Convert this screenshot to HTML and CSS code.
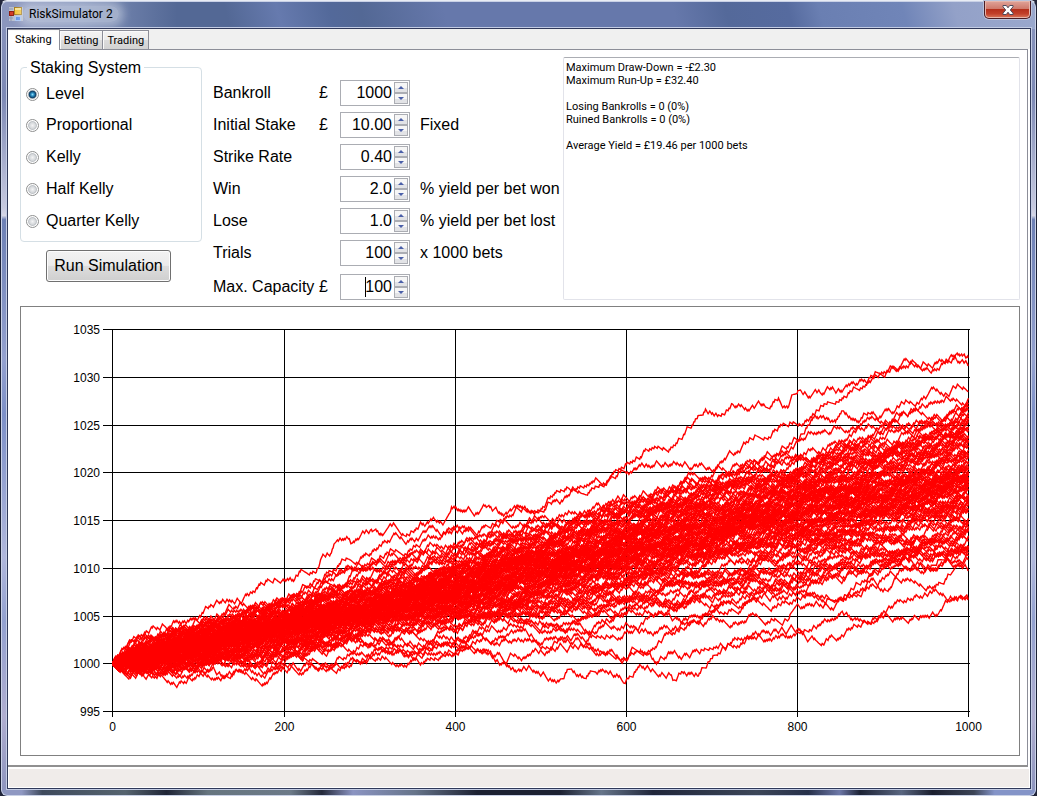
FILE: index.html
```html
<!DOCTYPE html>
<html lang="en">
<head>
<meta charset="utf-8">
<title>RiskSimulator 2</title>
<link rel="stylesheet" href="styles.css">
</head>
<body>
<div class="window">
  <header class="titlebar">
    <svg class="app-icon" width="14" height="14" viewBox="0 0 14 14" aria-hidden="true">
      <rect x="0" y="0" width="14" height="14" fill="#b9c0d0"/>
      <rect x="5.500" y="0.500" width="7" height="7" fill="#f9c52c" stroke="#a87b16"/>
      <rect x="6" y="1" width="6" height="2" fill="#fde58a"/>
      <rect x="0.500" y="4.500" width="4" height="4" fill="#d33a24" stroke="#8e1d10"/>
      <rect x="6.500" y="9.500" width="5" height="4" fill="#5b8fe6" stroke="#a9c6f5"/>
      <path d="M0 2h4M0 11h4M2 9v5" stroke="#8f97ab" fill="none"/>
    </svg>
    <h1 class="title">RiskSimulator 2</h1>
    <button class="close" type="button" aria-label="Close">
      <svg width="12" height="10" viewBox="0 0 12 10" aria-hidden="true">
        <path d="M1 .5h3.300L6 2.800 7.700.5H11v1.300L8.300 5 11 8.200v1.300H7.700L6 7.200 4.300 9.500H1V8.200L3.700 5 1 1.800z" fill="#fff" stroke="#4e4a5c" stroke-width="1"/>
      </svg>
    </button>
  </header>

  <div class="client">
    <nav class="tabs" role="tablist">
      <button class="tab tab-active" type="button" role="tab" aria-selected="true">Staking</button>
      <button class="tab" type="button" role="tab" aria-selected="false">Betting</button>
      <button class="tab" type="button" role="tab" aria-selected="false">Trading</button>
    </nav>

    <main class="page">
      <div class="settings">
        <div class="side">
          <fieldset class="group">
            <legend>Staking System</legend>
            <label class="option"><input type="radio" name="system" checked>Level</label>
            <label class="option"><input type="radio" name="system">Proportional</label>
            <label class="option"><input type="radio" name="system">Kelly</label>
            <label class="option"><input type="radio" name="system">Half Kelly</label>
            <label class="option"><input type="radio" name="system">Quarter Kelly</label>
          </fieldset>
          <button class="run" type="button">Run Simulation</button>
        </div>

        <form class="fields">
          <div class="field"><label for="bankroll">Bankroll</label><span class="unit">£</span>
            <span class="spin"><input id="bankroll" type="text" value="1000"><span class="arrows"><button type="button" class="up" aria-label="Increase"></button><button type="button" class="down" aria-label="Decrease"></button></span></span></div>
          <div class="field"><label for="stake">Initial Stake</label><span class="unit">£</span>
            <span class="spin"><input id="stake" type="text" value="10.00"><span class="arrows"><button type="button" class="up" aria-label="Increase"></button><button type="button" class="down" aria-label="Decrease"></button></span></span><span class="note">Fixed</span></div>
          <div class="field"><label for="strike">Strike Rate</label><span class="unit"></span>
            <span class="spin"><input id="strike" type="text" value="0.40"><span class="arrows"><button type="button" class="up" aria-label="Increase"></button><button type="button" class="down" aria-label="Decrease"></button></span></span></div>
          <div class="field"><label for="win">Win</label><span class="unit"></span>
            <span class="spin"><input id="win" type="text" value="2.0"><span class="arrows"><button type="button" class="up" aria-label="Increase"></button><button type="button" class="down" aria-label="Decrease"></button></span></span><span class="note">% yield per bet won</span></div>
          <div class="field"><label for="lose">Lose</label><span class="unit"></span>
            <span class="spin"><input id="lose" type="text" value="1.0"><span class="arrows"><button type="button" class="up" aria-label="Increase"></button><button type="button" class="down" aria-label="Decrease"></button></span></span><span class="note">% yield per bet lost</span></div>
          <div class="field"><label for="trials">Trials</label><span class="unit"></span>
            <span class="spin"><input id="trials" type="text" value="100"><span class="arrows"><button type="button" class="up" aria-label="Increase"></button><button type="button" class="down" aria-label="Decrease"></button></span></span><span class="note">x 1000 bets</span></div>
          <div class="field field-last"><label for="capacity">Max. Capacity</label><span class="unit">£</span>
            <span class="spin"><input id="capacity" class="editing" type="text" value="100"><span class="arrows"><button type="button" class="up" aria-label="Increase"></button><button type="button" class="down" aria-label="Decrease"></button></span></span></div>
        </form>

        <textarea class="results" aria-label="Results" readonly>Maximum Draw-Down = -£2.30
Maximum Run-Up = £32.40

Losing Bankrolls = 0 (0%)
Ruined Bankrolls = 0 (0%)

Average Yield = £19.46 per 1000 bets</textarea>
      </div>

      <div class="chart">
        <svg id="plot" viewBox="21 307 998 448" role="img" aria-label="Bankroll by number of bets"></svg>
      </div>
    </main>

    <footer class="status"></footer>
  </div>
</div>
<script src="chart.js"></script>
</body>
</html>
```
FILE: styles.css
```css
* { box-sizing: border-box; }

body {
  margin: 0;
  background: #23263a;
  color: #000;
  font: 16px/20px "Liberation Sans", Arial, sans-serif;
}

button, input, textarea { font: inherit; color: inherit; }

.window {
  display: flex;
  flex-direction: column;
  min-height: 100vh;
  padding: 0 5px 7px 6px;
  border: 1px solid #1b2036;
  border-top-color: #e8ecf4;
  border-radius: 7px;
  box-shadow: inset 0 0 0 1px #c9d1e6;
  background:
    linear-gradient(90deg, #8b96bd 0, #8b96bd 2%, #7f8fb8 8%, transparent 17%) 0 0 / 100% 28px no-repeat,
    linear-gradient(75deg, #536895 0, #536895 22%, #667aae 27%, #53699a 32%, #536895 35%, #6678ab 43%, #6678ab 65%, #54699a 70%, #566b9f 76%, #6a7fb2 79%, #7085b8 87%, #93a1c8 92%, #9aa8cd 100%) 0 0 / 100% 28px no-repeat,
    linear-gradient(90deg, #8f98c2 0 2%, #3e4a5c 4%, #56646f 12%, #1f2536 16%, #66757f 20%, #6c7a88 28%, #24293b 31%, #8b94c2 34%, #66748a 40%, #1c2132 46%, #1c2132 54%, #66758a 58%, #20263a 63%, #3c4658 73%, #26304a 78%, #6d78a8 81%, #1c2235 83%, #596680 87%, #1a1e2e 90%, #3c4456 94%, #8494c8 96%) 0 100% / 100% 6px no-repeat,
    linear-gradient(#8a95bd 0, #7d89b5 12%, #c6c9df 26%, #d6d7e6 27%, #6d80b5 27.5%, #94a1cf 45%, #7d90c8 52%, #b0b7dc 70%, #93a1d0 78%, #b0aed0 90%, #8b93bd 100%);
}

.titlebar {
  display: flex;
  align-items: center;
  height: 26px;
  padding-left: 2px;
}

.title {
  margin: 0 auto 0 0;
  padding: 0 6px;
  border-radius: 10px;
  background: rgba(225, 230, 240, .45);
  box-shadow: 0 0 9px 5px rgba(225, 230, 240, .45);
  font: 12px/16px Roboto, sans-serif;
}

.close {
  display: grid;
  place-items: center;
  align-self: flex-start;
  width: 47px;
  height: 18px;
  padding: 0;
  border: 1px solid #4a1c24;
  border-top: 0;
  border-radius: 0 0 5px 5px;
  background: linear-gradient(#e0a49a 0, #cf7a6c 45%, #b5301c 50%, #c2402a 75%, #d9785c 100%);
  box-shadow: inset 0 0 0 1px #e6b5aa, 0 0 0 1px #b9c2da;
}

.client {
  display: flex;
  flex: 1;
  flex-direction: column;
  margin-top: 1px;
  border: 1px solid #30395a;
  box-shadow: 0 0 0 1px #c3cce4;
  background: #fff;
}

.tabs {
  display: flex;
  align-items: flex-end;
  height: 20px;
  background: #f0f0f0;
}

.tab {
  height: 19px;
  padding: 0 4px;
  border: 1px solid #8c8e98;
  border-bottom: 0;
  border-left: 0;
  background: linear-gradient(#f3f3f3 0, #ececec 50%, #dcdcdc 51%, #d2d2d2 100%);
  box-shadow: inset 1px 1px #fafafa;
  font: 11px/20px Roboto, sans-serif;
}

.tab-active {
  position: relative;
  height: 21px;
  margin-bottom: -1px;
  padding: 0 7px;
  background: #fff;
}

.page {
  flex: 1;
  margin-right: 2px;
  padding: 7px 7px 9px 12px;
  border: 1px solid #8c8e98;
  border-left: 0;
  border-bottom: 2px solid #909090;
}

.settings {
  display: flex;
  align-items: flex-start;
}

.side {
  display: flex;
  flex-direction: column;
  width: 182px;
  margin-right: 11px;
}

.group {
  min-width: 0;
  height: 185px;
  margin: 0;
  padding: 2px 0 0 5px;
  border: 1px solid #d5dfe5;
  border-radius: 4px;
}

.group legend {
  margin-left: 1px;
  padding: 1px 3px 0;
  line-height: 19px;
}

.option {
  display: flex;
  align-items: center;
  gap: 7px;
  height: 32px;
}

.option:first-of-type { height: 30px; }

.option input {
  appearance: none;
  width: 13px;
  height: 13px;
  margin: 0;
  border: 1px solid #8e8f8f;
  border-radius: 50%;
  background: radial-gradient(circle at 50% 50%, #f4f4f5 0, #d3d6d9 40%, #b9bdc2 50%, #fff 62%);
}

.option input:checked {
  background: radial-gradient(circle at 50% 50%, #8fdcf8 0, #2b8fc4 20%, #0c3a60 44%, #b9bfc5 54%, #fff 66%);
}

.run {
  align-self: flex-start;
  width: 125px;
  height: 32px;
  margin: 8px 0 0 26px;
  padding: 0;
  border: 1px solid #707070;
  border-radius: 3px;
  background: linear-gradient(#f2f2f2 0, #ebebeb 48%, #dddddd 50%, #cfcfcf 100%);
  box-shadow: inset 0 0 0 1px #fcfcfc;
}

.fields {
  display: flex;
  flex-direction: column;
  gap: 6px;
  width: 350px;
  padding-top: 23px;
}

.field {
  display: grid;
  grid-template-columns: 106px 21px 70px 1fr;
  align-items: center;
  height: 26px;
  white-space: nowrap;
}

.field-last { margin-top: 2px; }

.note { padding-left: 10px; }

.spin {
  display: flex;
  height: 26px;
  padding: 1px;
  border: 1px solid #abadb3;
  background: #fff;
}

.spin input {
  flex: 1;
  min-width: 0;
  padding: 0 2px 0 0;
  border: 0;
  outline: 0;
  background: none;
  text-align: right;
}

.spin .editing {
  background: linear-gradient(#000, #000) 23px 50% / 1px 20px no-repeat;
}

.arrows {
  display: flex;
  flex-direction: column;
  width: 14px;
}

.arrows button {
  display: grid;
  place-items: center;
  flex: 1;
  padding: 0;
  border: 1px solid #abadb3;
  background: linear-gradient(#f6f6f6 50%, #e2e3e6 51%);
}

.up::before, .down::before {
  content: "";
  border: 0 solid transparent;
  border-width: 0 3px;
}

.up::before { border-bottom: 3px solid #4a5fa8; }
.down::before { border-top: 3px solid #4a5fa8; }

.results {
  flex: 1;
  min-width: 0;
  height: 243px;
  padding: 3px 2px;
  border: 1px solid #e2e3ea;
  border-top-color: #abadb3;
  border-radius: 2px;
  outline: 0;
  background: #fff;
  font-family: Roboto, sans-serif;
  font-size: 11px;
  line-height: 13px;
  resize: none;
}

.chart {
  margin-top: 6px;
  border: 1px solid #808080;
}

.chart svg {
  display: block;
  width: 100%;
}

.grid { fill: none; stroke: #000; shape-rendering: crispEdges; }
.run-line { fill: none; stroke: #f00; stroke-width: 1.4; }
.axis { font-size: 12px; }
.axis-y { text-anchor: end; }
.axis-x { text-anchor: middle; }

.status {
  height: 21px;
  border: 1px solid #fff;
  border-top-width: 2px;
  background: #f0ecea;
}
```
FILE: chart.js
```js
const plot = document.getElementById("plot");
const LEFT = 112.5, RIGHT = 968.5, TOP = 329.5, BOTTOM = 711.5;
const BETS = 1000, LOW = 995, HIGH = 1035;
const STEP_X = (RIGHT - LEFT) / BETS;
const STEP_Y = (BOTTOM - TOP) / (HIGH - LOW);
const px = (bet) => LEFT + bet * STEP_X;
const py = (value) => BOTTOM - (value - LOW) * STEP_Y;

function add(name, attrs, text) {
  const node = document.createElementNS("http://www.w3.org/2000/svg", name);
  for (const key in attrs) node.setAttribute(key, attrs[key]);
  if (text !== undefined) node.textContent = text;
  plot.appendChild(node);
}

let seed = 20117;
function random() {
  seed = (seed + 0x6d2b79f5) | 0;
  let t = Math.imul(seed ^ (seed >>> 15), 1 | seed);
  t = (t + Math.imul(t ^ (t >>> 7), 61 | t)) ^ t;
  return ((t ^ (t >>> 14)) >>> 0) / 4294967296;
}
const bet = () => (random() < 0.4 ? 0.2 : -0.1);

// Gridlines, tick marks and axis labels
for (let v = LOW; v <= HIGH; v += 5) {
  const y = Math.floor(py(v)) + 0.5;
  add("path", { class: "grid", d: `M103 ${y}H970` });
  add("text", { class: "axis axis-y", x: 100, y: y + 4 }, v);
}
for (let n = 0; n <= BETS; n += 200) {
  const x = Math.ceil(px(n) - 0.5) + 0.5;
  add("path", { class: "grid", d: `M${x} 329V717` });
  add("text", { class: "axis axis-x", x: x, y: 731 }, n);
}

function draw(points) {
  add("path", { class: "run-line", d: "M" + points.map((p) => p[0].toFixed(1) + " " + p[1].toFixed(1)).join("L") });
}

// Allowed band for ordinary runs: bet, lowest and highest value
const BAND = [[50, 999.2, 1003.4], [100, 999, 1005.3], [200, 999.6, 1008.2], [300, 1000, 1010.8],
  [400, 1000.3, 1013.7], [500, 1002, 1015.5], [600, 1004, 1019], [700, 1005.500, 1021.5],
  [800, 1007, 1024], [900, 1009, 1025.8], [1000, 1010.3, 1028.2]];

// Final values are spread evenly across the band, a little denser at its centre
function ordinaryRun(target) {
  for (;;) {
    const values = [1000];
    for (let n = 1; n <= BETS; n++) values.push(values[n - 1] + bet());
    if (Math.abs(values[BETS] - target) < 0.5 &&
        BAND.every(([n, low, high]) => values[n] >= low && values[n] <= high)) return values;
  }
}
const ORDINARY = 92;
for (let i = 0; i < ORDINARY; i++) {
  const u = (2 * i) / (ORDINARY - 1) - 1;
  const target = 1019.4 + 8.2 * Math.sign(u) * Math.pow(Math.abs(u), 1.4);
  draw(ordinaryRun(target).map((v, n) => [px(n), py(v)]));
}

// Outlying runs, pinned at plot coordinates with betting noise between pins
const OUTLIERS = [
  [[112,663],[124,648],[135,638],[150,629],[173,621],[200,617],[212,606],[235,602],[250,592],[280,583],[294,580],[303,571],[315,573],[320,560],[330,554],[337,540],[348,539],[352,543],[370,530],[378,533],[388,527],[403,535],[420,522],[432,519],[445,520],[451,507],[462,512],[484,506],[492,511],[503,516],[520,506],[533,513],[545,505],[568,488],[580,493],[600,485],[616,470],[625,464],[640,457],[655,447],[668,452],[690,428],[705,409],[718,415],[732,404],[745,408],[765,407],[778,398],[788,407],[800,390],[820,393],[832,387],[850,384],[875,375],[895,368],[915,365],[935,370],[955,355],[968,358]],
  [[112,663],[200,640],[300,610],[360,570],[420,545],[480,540],[560,520],[620,500],[680,488],[740,470],[797,440],[808,425],[822,406],[840,400],[860,388],[880,374],[890,370],[905,368],[932,368],[950,356],[960,362],[968,366]],
  [[112,663],[180,640],[285,600],[350,560],[390,540],[421,534],[440,535],[455,528],[468,531],[485,525],[505,517],[520,511],[535,512],[550,503],[568,495],[590,484],[610,476],[625,472],[650,468],[680,464],[700,465],[730,452],[745,444],[770,438],[787,426],[797,425],[815,416],[835,422],[843,411],[860,420],[870,414],[895,410],[920,400],[945,393],[968,392]],
  [[112,663],[140,673],[165,680],[178,684],[190,679],[212,668],[224,678],[240,670],[260,676],[290,668],[335,665],[365,662],[420,665],[455,655],[480,650],[492,658],[507,665],[520,670],[535,673],[560,679],[571,669],[583,678],[595,672],[608,674],[623,683],[640,665],[652,669],[670,675],[674,680],[682,672],[697,676],[705,668],[716,655],[730,645],[750,638],[765,633],[795,632],[815,640],[830,637],[850,630],[875,622],[900,618],[920,616],[940,610],[968,600]],
  [[112,663],[180,668],[240,672],[290,665],[330,668],[380,660],[430,655],[485,652],[500,664],[515,655],[540,650],[570,645],[600,655],[625,660],[640,650],[656,664],[668,652],[685,655],[700,652],[715,648],[725,650],[740,640],[760,637],[790,636],[797,632],[810,630],[825,620],[840,613],[858,620],[880,615],[897,600],[920,596],[940,593],[955,598],[968,599]],
  [[112,663],[200,655],[300,650],[400,645],[480,628],[540,622],[575,622],[590,635],[610,628],[640,625],[665,614],[690,624],[720,620],[740,622],[765,625],[787,621],[797,604],[825,603],[850,595],[870,585],[900,582],[935,587],[950,575],[968,571]],
  [[112,663],[200,664],[300,658],[400,650],[480,640],[510,642],[540,645],[560,637],[585,644],[600,651],[630,655],[660,642],[675,632],[700,620],[718,608],[745,603],[755,601],[775,607],[800,600],[825,604],[845,595],[870,580],[885,590],[900,570],[930,568],[945,560],[968,549]],
  [[112,663],[200,650],[300,640],[400,640],[455,640],[500,636],[540,648],[560,640],[585,642],[600,638],[625,633],[650,632],[680,625],[720,612],[750,600],[790,595],[830,600],[860,585],[900,560],[935,568],[968,560]]
];
for (const pins of OUTLIERS) {
  const points = [];
  for (let k = 0; k < pins.length - 1; k++) {
    const [x0, y0] = pins[k], [x1, y1] = pins[k + 1];
    const count = Math.max(2, Math.round((x1 - x0) / STEP_X));
    const walk = [0];
    for (let n = 1; n <= count; n++) walk.push(walk[n - 1] - bet() * STEP_Y);
    for (let n = 0; n < count; n++) {
      const t = n / count;
      points.push([x0 + (x1 - x0) * t + 0.5, y0 + (y1 - y0) * t + walk[n] - walk[count] * t]);
    }
  }
  points.push(pins[pins.length - 1]);
  draw(points);
}
```
